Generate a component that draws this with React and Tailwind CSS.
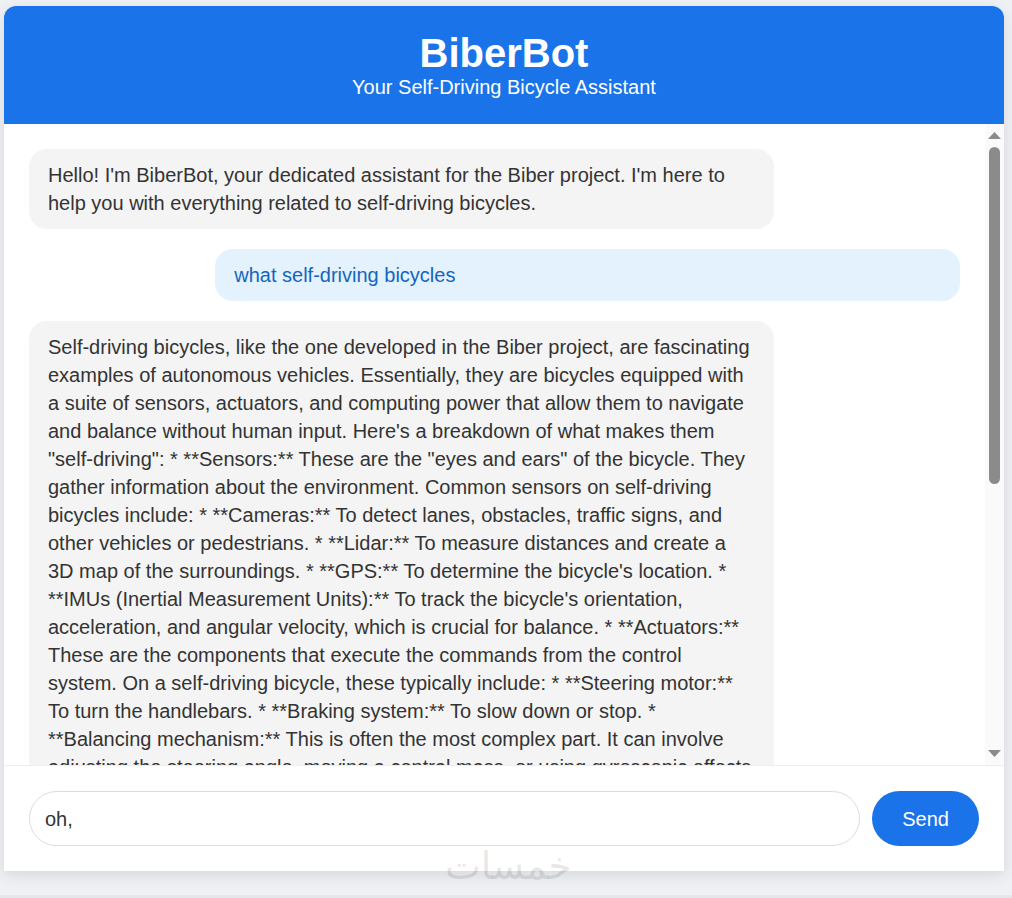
import React from "react";

const botIntro =
  "Hello! I'm BiberBot, your dedicated assistant for the Biber project. I'm here to help you with everything related to self-driving bicycles.";

const botLong =
  "Self-driving bicycles, like the one developed in the Biber project, are fascinating examples of autonomous vehicles. Essentially, they are bicycles equipped with a suite of sensors, actuators, and computing power that allow them to navigate and balance without human input. Here's a breakdown of what makes them \"self-driving\": * **Sensors:** These are the \"eyes and ears\" of the bicycle. They gather information about the environment. Common sensors on self-driving bicycles include: * **Cameras:** To detect lanes, obstacles, traffic signs, and other vehicles or pedestrians. * **Lidar:** To measure distances and create a 3D map of the surroundings. * **GPS:** To determine the bicycle's location. * **IMUs (Inertial Measurement Units):** To track the bicycle's orientation, acceleration, and angular velocity, which is crucial for balance. * **Actuators:** These are the components that execute the commands from the control system. On a self-driving bicycle, these typically include: * **Steering motor:** To turn the handlebars. * **Braking system:** To slow down or stop. * **Balancing mechanism:** This is often the most complex part. It can involve adjusting the steering angle, moving a central mass, or using gyroscopic effects to keep the bicycle upright. * **Propulsion motor:** To drive the bicycle forward. * **Computing and Software:** This is the \"brain\" of the bicycle. It processes data from the sensors and makes decisions. Key software components include: * **Perception:** Interpreting sensor data to understand the environment. * **Localization:** Determining the bicycle's precise position. * **Path planning:** Deciding the best route to take. * **Control algorithms:** Translating decisions into commands for the actuators, including keeping the bicycle balanced. **Why self-driving bicycles?** Self-driving bicycles have potential applications in areas like last-mile delivery, bike-sharing systems (where bikes could return themselves to docking stations), and research into autonomous vehicle control. The Biber project aims to explore these possibilities and advance the technology. Would you like to know more about any specific component or aspect of the project?";

function ScrollBar() {
  return (
    <div className="flex w-[19px] shrink-0 flex-col items-center bg-[#fafafa]">
      <svg width="13" height="7" viewBox="0 0 13 7" className="mt-[8px] shrink-0">
        <polygon points="0,7 6.5,0 13,7" fill="#8b8b8b" />
      </svg>
      <div className="mt-[8px] h-[337px] w-[11px] shrink-0 rounded-full bg-[#8b8b8b]" />
      <div className="flex-1" />
      <svg width="13" height="7" viewBox="0 0 13 7" className="mb-[8px] shrink-0">
        <polygon points="0,0 13,0 6.5,7" fill="#8b8b8b" />
      </svg>
    </div>
  );
}

export default function App() {
  return (
    <div className="relative h-[898px] w-full overflow-hidden bg-[#eef0f3] font-['Liberation_Sans',Arial,sans-serif]">
      <div className="ml-[4px] mt-[6px] flex h-[865px] w-[1000px] flex-col overflow-hidden rounded-t-[12px] bg-white shadow-[0_4px_14px_rgba(0,0,0,0.10)]">
        <header className="shrink-0 bg-[#1a73e8] pb-[26px] pt-[24px] text-center text-white">
          <h1 className="text-[40px] font-bold leading-[46px]">BiberBot</h1>
          <p className="text-[20px] leading-[22px]">Your Self-Driving Bicycle Assistant</p>
        </header>

        <div className="flex h-[641px] shrink-0">
          <div className="flex min-w-0 flex-1 flex-col gap-[20px] overflow-hidden p-[25px] text-[20px] leading-[28px]">
            <div className="w-[80%] shrink-0 self-start rounded-[18px] bg-[#f4f4f4] py-[12px] pl-[19px] pr-[20px] text-[#333333]">
              {botIntro}
            </div>
            <div className="w-[80%] shrink-0 self-end rounded-[18px] bg-[#e3f2fd] py-[12px] pl-[19px] pr-[20px] text-[#1565c0]">
              what self-driving bicycles
            </div>
            <div className="w-[80%] shrink-0 self-start rounded-[18px] bg-[#f4f4f4] py-[12px] pl-[19px] pr-[20px] text-[#333333]">
              {botLong}
            </div>
          </div>
          <ScrollBar />
        </div>

        <div className="flex flex-1 items-stretch gap-[12px] border-t border-[#eeeeee] p-[25px]">
          <div className="flex h-[55px] flex-1 items-center rounded-full border border-[#dddddd] px-[15px] text-[20px] text-[#333333]">
            oh,
          </div>
          <button className="h-[55px] rounded-full bg-[#1a73e8] px-[30px] text-[20px] text-white">
            Send
          </button>
        </div>
      </div>

      <div className="pointer-events-none absolute left-[445px] top-[846px] font-['DejaVu_Sans',sans-serif] text-[38px] leading-[40px] text-black/10">
        خمسات
      </div>
      <div className="absolute bottom-0 left-0 h-[3px] w-full bg-[#e4e6e9]" />
    </div>
  );
}
